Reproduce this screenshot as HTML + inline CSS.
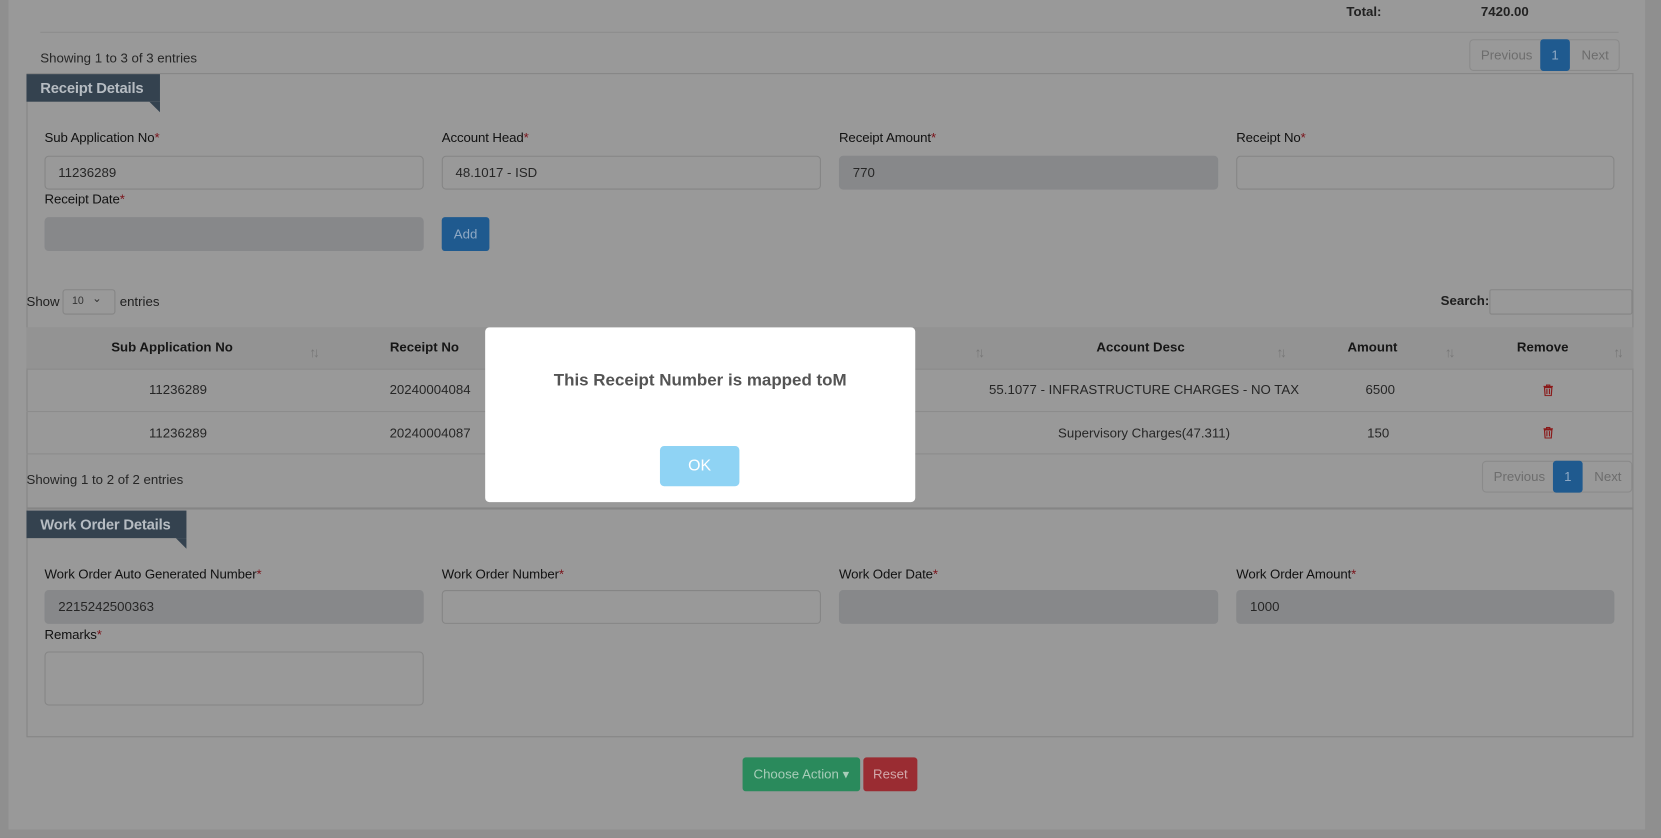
<!DOCTYPE html>
<html><head><meta charset="utf-8"><style>
html,body{margin:0;padding:0;width:1661px;height:838px;overflow:hidden;background:#8f8f8f;font-family:"Liberation Sans",sans-serif;}
#w{position:absolute;left:0;top:0;width:1568px;height:791px;transform:scale(1.05931);transform-origin:0 0;background:#8f8f8f;}
.a{position:absolute;}
.t{position:absolute;font-size:12.5px;color:#1f1f1f;white-space:nowrap;}
.lb{position:absolute;font-size:12.5px;color:#111;white-space:nowrap;letter-spacing:-0.1px;}
.lb i{color:#7a1018;font-style:normal;}
.in{position:absolute;height:32px;border:1px solid #858585;border-radius:4px;background:#999;box-sizing:border-box;font-size:12.5px;color:#262626;padding:8px 0 0 12px;}
.dis{background:#87888a;border-color:#87888a;}
.pg{position:absolute;height:30px;border:1px solid #8a8a8a;border-radius:4px;box-sizing:border-box;font-size:12.5px;color:#6d6d6d;}
.pg span{position:absolute;top:7px;}
.pg b{position:absolute;top:-1px;height:30px;width:28px;background:#1f5a8f;border-radius:3px;color:#8fa9c4;font-weight:normal;text-align:center;line-height:30px;}
.rib{position:absolute;height:26px;background:#34424f;color:#b6bcc2;font-weight:bold;font-size:14px;line-height:26px;padding-left:13px;box-sizing:border-box;letter-spacing:-0.2px;}
.rib:after{content:"";position:absolute;right:0;bottom:-10px;border-left:10px solid transparent;border-top:10px solid #34424f;}
.th{position:absolute;font-size:12.5px;color:#161616;font-weight:bold;}
.so{position:absolute;font-size:13px;color:#777;letter-spacing:-3px;}
.td{position:absolute;font-size:12.5px;color:#262626;transform:translateX(-50%);white-space:nowrap;}
.trash{position:absolute;width:9px;height:11px;}
</style></head><body><div id="w">
<div class="a" style="left:8px;top:0;width:1545px;height:783px;background:#999;"></div>
<div class="t" style="left:1271px;top:4px;font-weight:bold;color:#222;">Total:</div>
<div class="t" style="left:1398px;top:4px;font-weight:bold;color:#222;">7420.00</div>
<div class="a" style="left:38px;top:30px;width:1490px;height:1px;background:#8c8c8c;"></div>
<div class="t" style="left:38px;top:48px;color:#262626;">Showing 1 to 3 of 3 entries</div>
<div class="pg" style="left:1387px;top:37px;width:142px;"><span style="left:10px;">Previous</span><b style="left:66px;">1</b><span style="left:105px;">Next</span></div>

<div class="a" style="left:25px;top:69px;width:1517px;height:627px;border:1px solid #858585;box-sizing:border-box;"></div>
<div class="rib" style="left:25px;top:70px;width:126px;">Receipt Details</div>

<div class="lb" style="left:42px;top:123px;">Sub Application No<i>*</i></div>
<div class="lb" style="left:417px;top:123px;">Account Head<i>*</i></div>
<div class="lb" style="left:792px;top:123px;">Receipt Amount<i>*</i></div>
<div class="lb" style="left:1167px;top:123px;">Receipt No<i>*</i></div>
<div class="in" style="left:42px;top:147px;width:358px;">11236289</div>
<div class="in" style="left:417px;top:147px;width:358px;">48.1017 - ISD</div>
<div class="in dis" style="left:792px;top:147px;width:358px;">770</div>
<div class="in" style="left:1167px;top:147px;width:357px;"></div>
<div class="lb" style="left:42px;top:181px;">Receipt Date<i>*</i></div>
<div class="in dis" style="left:42px;top:205px;width:358px;"></div>
<div class="a" style="left:417px;top:205px;width:45px;height:32px;background:#1f5a8f;border-radius:3px;color:#8fa9c4;font-size:12.5px;text-align:center;line-height:32px;">Add</div>

<div class="t" style="left:25px;top:278px;">Show</div>
<div class="a" style="left:59px;top:273px;width:50px;height:24px;border:1px solid #858585;border-radius:3px;box-sizing:border-box;font-size:10px;color:#333;padding:5px 0 0 8px;">10 <span style="position:absolute;left:27px;top:1px;font-size:11px;">&#8964;</span></div>
<div class="t" style="left:113px;top:278px;">entries</div>
<div class="t" style="left:1360px;top:277px;font-weight:bold;">Search:</div>
<div class="a" style="left:1406px;top:273px;width:135px;height:24px;border:1px solid #858585;border-radius:2px;box-sizing:border-box;"></div>

<div class="a" style="left:25px;top:309px;width:1517px;height:39px;background:#939393;"></div>
<div class="a" style="left:25px;top:348px;width:1517px;height:1px;background:#8a8a8a;"></div>
<div class="a" style="left:25px;top:388px;width:1517px;height:1px;background:#8c8c8c;"></div>
<div class="a" style="left:25px;top:428px;width:1517px;height:1px;background:#8c8c8c;"></div>
<div class="th" style="left:105px;top:321px;">Sub Application No</div><div class="so" style="left:292px;top:325px;">↑↓</div>
<div class="th" style="left:368px;top:321px;">Receipt No</div>
<div class="so" style="left:920px;top:325px;">↑↓</div>
<div class="th" style="left:1035px;top:321px;">Account Desc</div><div class="so" style="left:1205px;top:325px;">↑↓</div>
<div class="th" style="left:1272px;top:321px;">Amount</div><div class="so" style="left:1364px;top:325px;">↑↓</div>
<div class="th" style="left:1432px;top:321px;">Remove</div><div class="so" style="left:1523px;top:325px;">↑↓</div>

<div class="td" style="left:168px;top:361px;">11236289</div>
<div class="td" style="left:406px;top:361px;">20240004084</div>
<div class="td" style="left:1080px;top:361px;">55.1077 - INFRASTRUCTURE CHARGES - NO TAX</div>
<div class="td" style="left:1303px;top:361px;">6500</div>
<div class="td" style="left:168px;top:402px;">11236289</div>
<div class="td" style="left:406px;top:402px;">20240004087</div>
<div class="td" style="left:1080px;top:402px;">Supervisory Charges(47.311)</div>
<div class="td" style="left:1301px;top:402px;">150</div>
<svg class="trash" style="left:1457px;top:363px;" viewBox="0 0 9 11"><path d="M0 1.8h9M3 1.8V.5h3v1.3M1 2.8l.6 7.7h5.8l.6-7.7zM3.3 4v5M5.7 4v5" fill="none" stroke="#8a1a1a" stroke-width="1.1"/></svg>
<svg class="trash" style="left:1457px;top:403px;" viewBox="0 0 9 11"><path d="M0 1.8h9M3 1.8V.5h3v1.3M1 2.8l.6 7.7h5.8l.6-7.7zM3.3 4v5M5.7 4v5" fill="none" stroke="#8a1a1a" stroke-width="1.1"/></svg>

<div class="t" style="left:25px;top:446px;color:#262626;">Showing 1 to 2 of 2 entries</div>
<div class="pg" style="left:1399px;top:435px;width:142px;"><span style="left:10px;">Previous</span><b style="left:66px;">1</b><span style="left:105px;">Next</span></div>

<div class="a" style="left:25px;top:479px;width:1517px;height:2px;background:#858585;"></div>
<div class="rib" style="left:25px;top:482px;width:151px;">Work Order Details</div>

<div class="lb" style="left:42px;top:535px;">Work Order Auto Generated Number<i>*</i></div>
<div class="lb" style="left:417px;top:535px;">Work Order Number<i>*</i></div>
<div class="lb" style="left:792px;top:535px;">Work Oder Date<i>*</i></div>
<div class="lb" style="left:1167px;top:535px;">Work Order Amount<i>*</i></div>
<div class="in dis" style="left:42px;top:557px;width:358px;">2215242500363</div>
<div class="in" style="left:417px;top:557px;width:358px;"></div>
<div class="in dis" style="left:792px;top:557px;width:358px;"></div>
<div class="in dis" style="left:1167px;top:557px;width:357px;">1000</div>
<div class="lb" style="left:42px;top:592px;">Remarks<i>*</i></div>
<div class="in" style="left:42px;top:615px;width:358px;height:51px;"></div>

<div class="a" style="left:701px;top:715px;width:111px;height:32px;background:#2a8a5c;border-radius:3px;color:#a8cdb9;font-size:12.5px;line-height:32px;text-align:center;">Choose Action &#9662;</div>
<div class="a" style="left:815px;top:715px;width:51px;height:32px;background:#9a2c32;border-radius:3px;color:#d2a9ab;font-size:12.5px;line-height:32px;text-align:center;">Reset</div>

<div class="a" style="left:458px;top:309px;width:406px;height:165px;background:#fff;border-radius:4px;"></div>
<div class="a" style="left:458px;top:351px;width:406px;text-align:center;font-size:16px;font-weight:bold;color:#545454;">This Receipt Number is mapped toM</div>
<div class="a" style="left:623px;top:421px;width:75px;height:38px;background:#8fd3f4;border-radius:4px;color:#fff;font-size:15px;text-align:center;line-height:38px;">OK</div>
</div></body></html>
